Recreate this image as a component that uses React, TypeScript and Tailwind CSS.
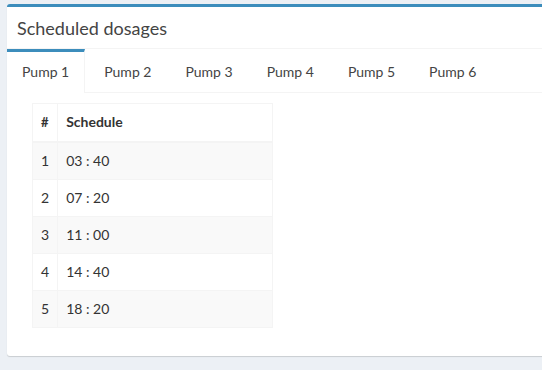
import React from "react";

const rows = [
  ["1", "03 : 40"],
  ["2", "07 : 20"],
  ["3", "11 : 00"],
  ["4", "14 : 40"],
  ["5", "18 : 20"],
];

const tabs = ["Pump 1", "Pump 2", "Pump 3", "Pump 4", "Pump 5", "Pump 6"];

export default function App() {
  return (
    <div
      className="w-[542px] h-[370px] overflow-hidden bg-[#ecf0f5] pt-[4px] pl-[7px]"
      style={{ fontFamily: "Lato, 'Open Sans', sans-serif" }}
    >
      <div className="w-[560px] bg-white border-t-[3px] border-[#3c8dbc] rounded-[3px] shadow-[0_1px_1px_rgba(0,0,0,0.15)]">
        <div className="h-[42px] flex items-center px-[10px] border-b border-[#f4f4f4]">
          <h3 className="text-[18px] leading-[20px] text-[#444]">Scheduled dosages</h3>
        </div>
        <ul className="flex border-b border-[#f4f4f4]">
          {tabs.map((t, i) => (
            <li
              key={t}
              className={
                i === 0
                  ? "border-t-[3px] border-[#3c8dbc] border-r border-r-[#f4f4f4] mr-[4px] -mb-px bg-white"
                  : "border-t-[3px] border-transparent mr-[4px]"
              }
            >
              <a className="block px-[15px] py-[10px] text-[14px] leading-[20px] text-[#444]">{t}</a>
            </li>
          ))}
        </ul>
        <div className="pt-[10px] pl-[25px] pb-[28px]">
          <table className="w-[241px] border-collapse border border-[#f4f4f4] text-[14px] leading-[20px] text-[#333]">
            <thead>
              <tr>
                <th className="w-[25px] text-left px-[8px] pt-[8px] pb-[9px] border border-[#f4f4f4] border-b-2 font-bold text-[13px]">#</th>
                <th className="text-left px-[8px] pt-[8px] pb-[9px] border border-[#f4f4f4] border-b-2 font-bold text-[14px]">Schedule</th>
              </tr>
            </thead>
            <tbody>
              {rows.map((r, i) => (
                <tr key={r[0]} className={i % 2 === 0 ? "bg-[#f9f9f9]" : "bg-white"}>
                  <td className="px-[8px] py-[8px] border border-[#f4f4f4]">{r[0]}</td>
                  <td className="px-[8px] py-[8px] border border-[#f4f4f4]">{r[1]}</td>
                </tr>
              ))}
            </tbody>
          </table>
        </div>
      </div>
    </div>
  );
}
